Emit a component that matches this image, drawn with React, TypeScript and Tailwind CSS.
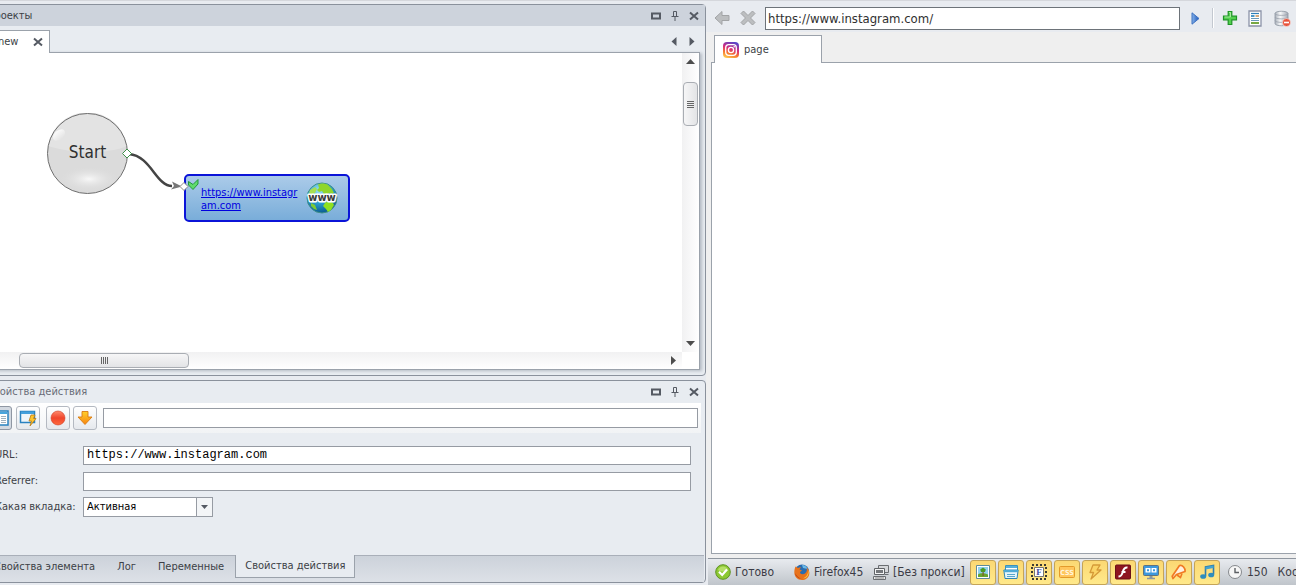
import { useState, type ReactNode } from 'react';

const TABS = ['Свойства элемента', 'Лог', 'Переменные', 'Свойства действия'];

function PanelTitle({ title, active }: { title: string; active?: boolean }) {
    return (
        <div className={`flex items-center justify-between pl-1 pr-[6px] ${active ? 'h-[21px] bg-[#cdd3dc] text-[#3c3f46]' : 'h-[22px] text-[#686d78]'}`}>
            <h2>{title}</h2>
            <div className="flex items-center gap-[9px]">
                <button aria-label="Развернуть">
                    <svg width="10" height="10" viewBox="0 0 10 10"><path d="M1 2.500h8v5H1z" fill="none" stroke="#555a63" strokeWidth="2" /></svg>
                </button>
                <button aria-label="Закрепить">
                    <svg width="10" height="10" viewBox="0 0 10 10"><path d="M3.500 5.500v-5h3v5M1.500 5.500h7M5 6v4" fill="none" stroke="#555a63" /><path d="M6 1h1v4H6z" fill="#555a63" /></svg>
                </button>
                <button aria-label="Закрыть">
                    <svg width="10" height="10" viewBox="0 0 10 10"><path d="M1 1.500l8 7M9 1.500l-8 7" fill="none" stroke="#555a63" strokeWidth="2" /></svg>
                </button>
            </div>
        </div>
    );
}

function GlobeIcon() {
    return (
        <svg width="32" height="32" viewBox="0 0 32 32" className="shrink-0">
            <defs>
                <radialGradient id="globe" cx="40%" cy="25%" r="75%">
                    <stop offset="0" stopColor="#9be0f5" />
                    <stop offset="0.55" stopColor="#2b9fd0" />
                    <stop offset="1" stopColor="#0b5c92" />
                </radialGradient>
            </defs>
            <circle cx="16" cy="16" r="15" fill="url(#globe)" stroke="#3f8f86" />
            <path d="M12 2.500c3-1.500 8-1 10 .5l4 4 2 4-3 1-2-1-2 2-3-1-2-3-3 1-2-2 2-2z" fill="#8fd62c" />
            <path d="M4 8l5-3 2 2-2 4-4 2-2-1z" fill="#a6df52" />
            <path d="M19 21l3-2 5 2 1 2-3 5-3 2-2-3-3-3z" fill="#8fe01f" />
            <path d="M5 21l4 2 2 5-3-1-3-3z" fill="#7ecb33" />
            <text x="16" y="19" textAnchor="middle" fontFamily="DejaVu Sans, sans-serif" fontWeight="bold" fontSize="10" fill="#3b3b3b" stroke="#fff" strokeWidth="3" strokeLinejoin="round" paintOrder="stroke">www</text>
        </svg>
    );
}

function StartNode() {
    return (
        <div className="absolute left-[58px] top-[60px] flex h-[81px] w-[81px] items-center justify-center">
            <svg className="absolute inset-0" width="81" height="81" viewBox="0 0 81 81">
                <defs>
                    <radialGradient id="glow" cx=".5" cy=".5" r=".5">
                        <stop stopColor="#f8f8f8" />
                        <stop offset="1" stopColor="#dadada" stopOpacity="0" />
                    </radialGradient>
                    <linearGradient id="shine" x2="0" y2="1">
                        <stop stopColor="#fbfbfb" />
                        <stop offset="1" stopColor="#e4e4e4" />
                    </linearGradient>
                </defs>
                <circle cx="40.500" cy="40.500" r="40" fill="#dbdbdb" />
                <path d="M1 33a40 40 0 0 1 79 0c-20 9-58 7-79 0z" fill="#e3e3e3" />
                <ellipse cx="42" cy="66" rx="31" ry="13" fill="url(#glow)" />
                <ellipse cx="12" cy="22" rx="7" ry="4.500" transform="rotate(-40 12 22)" fill="url(#shine)" />
                <circle cx="40.500" cy="40.500" r="40" fill="none" stroke="#6e6e6e" />
            </svg>
            <span className="relative pb-1 text-[17px] text-[#303030]">Start</span>
        </div>
    );
}

function Canvas() {
    return (
        <div className="relative min-w-0 flex-1 overflow-hidden bg-white">
            <StartNode />
            <div className="absolute left-[195px] top-[121px] flex h-[48px] w-[166px] items-center justify-between rounded-[5px] border-2 border-[#0b14d8] bg-gradient-to-b from-[#abcbe9] to-[#79add9] pl-[15px] pr-[10px]">
                <a href="https://www.instagram.com" className="pt-[2px] text-[11px] leading-[13px] text-[#0000e0] underline">
                    https://www.instagr<br />am.com
                </a>
                <GlobeIcon />
            </div>
            {/* link between the two nodes */}
            <svg className="absolute left-[130px] top-[90px]" width="90" height="56" viewBox="0 0 90 56">
                <path d="M10 11c22 2 27 32 43 32" fill="none" stroke="#444" strokeWidth="2.500" />
                <path d="M53 38.500l10 5-11 3 3-3.500z" fill="#777" />
                <path d="M3.500 10.500l4.500-4.500 4.500 4.500-4.500 4.500z" fill="#fff" stroke="#3f8f4a" />
                <path d="M61 43.500l4-4 4 4-4 4z" fill="#fff" stroke="#888" />
                <path d="M69.500 38.500v3.500l4.500 4.500 5-5.500v-4.500l-5 5z" fill="#5fdc6b" stroke="#24963c" />
            </svg>
        </div>
    );
}

function ProjectPanel() {
    return (
        <section className="flex min-h-0 flex-1 flex-col rounded-sm border border-[#8a919c] bg-[#e8ecf1]">
            <PanelTitle title="Проекты" active />
            <div className="flex min-h-0 flex-1 flex-col pb-[5px] pl-[5px] pr-[5px] pt-1">
                <div className="z-10 -mb-px flex items-start justify-between">
                    <button className="flex h-[23px] w-[62px] items-center justify-between border border-b-0 border-[#9ba2ab] bg-white pl-[9px] pr-[6px]">
                        new
                        <svg width="10" height="10" viewBox="0 0 10 10"><path d="M1 1.500l8 7M9 1.500l-8 7" stroke="#555a63" strokeWidth="2" /></svg>
                    </button>
                    <div className="flex h-[22px] items-center gap-3 pr-[5px]">
                        <button aria-label="Назад"><svg width="6" height="9" viewBox="0 0 6 9"><path d="M5.500 0v9L.5 4.500z" fill="#555a63" /></svg></button>
                        <button aria-label="Вперёд"><svg width="6" height="9" viewBox="0 0 6 9"><path d="M.5 0v9l5-4.500z" fill="#555a63" /></svg></button>
                    </div>
                </div>
                <div className="flex min-h-0 flex-1 flex-col border border-[#9ba2ab] bg-white shadow-[2px_1px_3px_#b4bac3]">
                    <div className="flex min-h-0 flex-1">
                        <Canvas />
                        <div className="flex w-[17px] flex-col items-center bg-gradient-to-r from-[#f1f1f2] to-white py-[6px]">
                            <svg width="9" height="5" viewBox="0 0 9 5"><path d="M0 5h9L4.500 0z" fill="#4d4d4d" /></svg>
                            <div className="mt-[18px] flex h-[44px] w-[15px] flex-col items-center justify-center gap-px rounded-sm border border-[#a9adb3] bg-gradient-to-r from-[#f6f6f7] to-[#e3e4e6]">
                                <i className="h-px w-[7px] bg-[#666]" />
                                <i className="h-px w-[7px] bg-[#666]" />
                                <i className="h-px w-[7px] bg-[#666]" />
                                <i className="h-px w-[7px] bg-[#666]" />
                            </div>
                            <svg className="mt-auto" width="9" height="5" viewBox="0 0 9 5"><path d="M0 0h9L4.500 5z" fill="#4d4d4d" /></svg>
                        </div>
                    </div>
                    <div className="flex h-[17px] pr-[17px]">
                        <div className="flex flex-1 items-center justify-between bg-gradient-to-b from-[#f1f1f2] to-white pl-[30px] pr-[6px]">
                            <div className="flex h-[15px] w-[170px] items-center justify-center gap-px rounded-sm border border-[#a9adb3] bg-gradient-to-b from-[#f6f6f7] to-[#e3e4e6]">
                                <i className="h-[7px] w-px bg-[#666]" />
                                <i className="h-[7px] w-px bg-[#666]" />
                                <i className="h-[7px] w-px bg-[#666]" />
                                <i className="h-[7px] w-px bg-[#666]" />
                            </div>
                            <svg width="5" height="9" viewBox="0 0 5 9"><path d="M0 0v9l5-4.500z" fill="#4d4d4d" /></svg>
                        </div>
                    </div>
                </div>
            </div>
        </section>
    );
}

function ToolButton({ label, pressed, children }: { label: string; pressed?: boolean; children: ReactNode }) {
    return (
        <button
            aria-label={label}
            className={`flex h-6 w-6 items-center justify-center rounded-[3px] border ${pressed ? 'border-[#8f97a3] bg-[#d3d9e1]' : 'border-[#b4b9c1] bg-gradient-to-b from-white to-[#e6e9ed]'}`}
        >
            {children}
        </button>
    );
}

function PropertiesPanel() {
    const [tab, setTab] = useState(TABS[3]);
    const [url, setUrl] = useState('https://www.instagram.com');

    return (
        <section className="flex flex-col rounded-sm border border-[#8a919c] bg-[#e8ecf1]">
            <PanelTitle title="Свойства действия" />
            <div className="mr-1 flex h-[30px] items-center bg-gradient-to-b from-white to-[#f1f3f5] pl-[5px] pr-[3px]">
                <ToolButton label="Таблица" pressed>
                    <svg width="18" height="18" viewBox="0 0 18 18"><path d="M1 2h16v14H1z" fill="#fff" stroke="#2a82c0" strokeWidth="1.500" /><path d="M2 3h14v2H2z" fill="#49a5dc" /><path d="M3 7.500h5M3 9.500h5M3 11.500h5M3 13.500h5M10 7.500h5M10 9.500h5M10 11.500h5M10 13.500h5" stroke="#9fb0bd" /></svg>
                </ToolButton>
                <div className="ml-1 mr-[6px]">
                    <ToolButton label="Событие">
                        <svg width="18" height="18" viewBox="0 0 18 18"><path d="M1.500 2.500h14v11h-14z" fill="#eef5fa" stroke="#2a82c0" strokeWidth="1.500" /><path d="M2 2.500h13v2.500H2z" fill="#43a0dc" /><path d="M12 6h4l-1.500 3.500H17L11 17l1.500-5H10z" fill="#ffc62e" stroke="#b97b17" strokeWidth=".8" /></svg>
                    </ToolButton>
                </div>
                <ToolButton label="Запись">
                    <svg width="16" height="16" viewBox="0 0 16 16">
                        <defs><linearGradient id="rec" x2="0" y2="1"><stop stopColor="#ff8a6c" /><stop offset=".5" stopColor="#f0452c" /><stop offset="1" stopColor="#ff6a3d" /></linearGradient></defs>
                        <circle cx="8" cy="8" r="7" fill="url(#rec)" stroke="#cf3b24" strokeWidth=".6" />
                    </svg>
                </ToolButton>
                <div className="ml-[3px] mr-[6px]">
                    <ToolButton label="Вниз">
                        <svg width="16" height="16" viewBox="0 0 16 16">
                            <defs><linearGradient id="down" x2="0" y2="1"><stop stopColor="#ffd12b" /><stop offset="1" stopColor="#f78410" /></linearGradient></defs>
                            <path d="M5 1.500h6V7h4l-7 7.500L1 7h4z" fill="url(#down)" stroke="#d97a12" strokeWidth=".9" />
                        </svg>
                    </ToolButton>
                </div>
                <input aria-label="Комментарий" className="h-5 min-w-0 flex-1 border border-[#969ba3] bg-white px-1" />
            </div>
            <form className="flex flex-col gap-[6px] pb-[38px] pl-3 pr-[14px] pt-3">
                <div className="flex h-5 items-center">
                    <label htmlFor="url" className="w-[88px]">URL:</label>
                    <input id="url" value={url} onChange={(e) => setUrl(e.target.value)} className="h-[19px] min-w-0 flex-1 border border-[#969ba3] bg-white px-[3px] font-['Liberation_Mono',monospace] text-[12px] text-black" />
                </div>
                <div className="flex h-5 items-center">
                    <label htmlFor="referrer" className="w-[88px]">Referrer:</label>
                    <input id="referrer" className="h-[19px] min-w-0 flex-1 border border-[#969ba3] bg-white px-[3px]" />
                </div>
                <div className="flex h-5 items-center">
                    <label htmlFor="which" className="w-[88px] whitespace-nowrap">Какая вкладка:</label>
                    <div className="relative">
                        <select id="which" className="h-5 w-[130px] appearance-none border border-[#969ba3] bg-white pl-[3px] text-black">
                            <option>Активная</option>
                            <option>Первая</option>
                        </select>
                        <span className="pointer-events-none absolute bottom-px right-px top-px flex w-[16px] items-center justify-center border-l border-[#969ba3] bg-[#f3f5f7]">
                            <svg width="7" height="4" viewBox="0 0 7 4"><path d="M0 0h7L3.500 4z" fill="#555a63" /></svg>
                        </span>
                    </div>
                </div>
            </form>
            <div className="mr-px flex h-[27px] items-start border-t border-[#a9afb9] bg-gradient-to-b from-[#ccd2da] to-[#dde1e7]">
                {TABS.map((name) => (
                    <button
                        key={name}
                        onClick={() => setTab(name)}
                        className={`whitespace-nowrap ${tab === name ? '-mt-px h-[23px] border border-t-0 border-[#9ba2ab] bg-[#e8ecf1] px-[9px]' : 'h-[22px] px-[11px]'}`}
                    >
                        {name}
                    </button>
                ))}
            </div>
        </section>
    );
}

function InstagramIcon() {
    return (
        <svg width="16" height="16" viewBox="0 0 16 16">
            <defs>
                <linearGradient id="insta" x1=".25" y1="1" x2=".6" y2="0">
                    <stop stopColor="#fecb52" />
                    <stop offset=".3" stopColor="#f7772e" />
                    <stop offset=".6" stopColor="#d62b7c" />
                    <stop offset="1" stopColor="#5a45c8" />
                </linearGradient>
            </defs>
            <rect width="16" height="16" rx="4" fill="url(#insta)" />
            <g fill="none" stroke="#fff" strokeWidth="1.300"><rect x="2.700" y="2.700" width="10.600" height="10.600" rx="3" /><circle cx="8" cy="8" r="2.600" /></g>
            <circle cx="11.200" cy="4.800" r=".8" fill="#fff" />
        </svg>
    );
}

function BrowserToolbar() {
    const [address, setAddress] = useState('https://www.instagram.com/');

    return (
        <div className="flex h-7 items-center bg-[#e8ebf0] pl-2 pr-[5px]">
            <button aria-label="Назад">
                <svg width="16" height="16" viewBox="0 0 16 16"><path d="M1 8l7-6.500v4h7v5H8v4z" fill="#bcbec0" stroke="#a2a4a6" /></svg>
            </button>
            <button aria-label="Стоп" className="ml-[10px]">
                <svg width="16" height="16" viewBox="0 0 16 16"><path d="M3.500 1L8 5.500 12.500 1 15 3.500 10.500 8l4.500 4.500-2.500 2.500L8 10.500 3.500 15 1 12.500 5.500 8 1 3.500z" fill="#bcbec0" stroke="#a2a4a6" /></svg>
            </button>
            <input
                aria-label="Адрес"
                value={address}
                onChange={(e) => setAddress(e.target.value)}
                className="ml-[9px] h-[23px] min-w-0 flex-1 border border-[#6d7379] bg-white px-[2px] text-[13px] text-[#303030]"
            />
            <button aria-label="Перейти" className="ml-[11px]">
                <svg width="9" height="13" viewBox="0 0 9 13">
                    <defs><linearGradient id="go"><stop stopColor="#86b4ec" /><stop offset="1" stopColor="#1d56b8" /></linearGradient></defs>
                    <path d="M1 .8v11.400l7-5.700z" fill="url(#go)" stroke="#3f72c0" />
                </svg>
            </button>
            <span className="ml-3 h-5 w-[2px] border-l border-[#c3c8d0] bg-white" />
            <button aria-label="Добавить" className="ml-2">
                <svg width="16" height="16" viewBox="0 0 16 16"><path d="M6.200 1.500h3.600v4.700h4.700v3.600H9.800v4.700H6.200V9.800H1.500V6.200h4.700z" fill="#52cf4e" stroke="#1e9426" strokeWidth="1.200" /><path d="M7 2.500h1.500V7H2.500" fill="none" stroke="#a5eb9c" /></svg>
            </button>
            <button aria-label="Страница" className="ml-[9px]">
                <svg width="16" height="17" viewBox="0 0 16 17"><path d="M2 1h12v15H2z" fill="#fff" stroke="#8b93a8" strokeWidth="1.300" /><path d="M4 3.500h8" stroke="#2f7fb8" strokeWidth="1.200" /><path d="M4 6h3.500" stroke="#4b97c7" strokeWidth="2" /><path d="M8.500 6H12" stroke="#d5a97a" strokeWidth="2" /><path d="M4 8.500h8M4 10.500h8" stroke="#6999ba" /><path d="M4 13h8" stroke="#77a843" strokeWidth="2" /></svg>
            </button>
            <button aria-label="Очистить данные" className="ml-[11px]">
                <svg width="17" height="17" viewBox="0 0 17 17">
                    <defs><linearGradient id="db"><stop stopColor="#a9b0ba" /><stop offset=".4" stopColor="#f8f9fa" /><stop offset="1" stopColor="#a3aab5" /></linearGradient></defs>
                    <path d="M1 3.500C1 .5 14 .5 14 3.500v10c0 3-13 3-13 0z" fill="url(#db)" stroke="#8d95a1" strokeWidth=".8" />
                    <path d="M1 3.500c0 2.500 13 2.500 13 0M1 7c0 2.500 13 2.500 13 0M1 10.500c0 2.500 13 2.500 13 0" fill="none" stroke="#9aa1ac" strokeWidth=".8" />
                    <circle cx="12.500" cy="12.500" r="4" fill="#e8533b" stroke="#fff" strokeWidth=".5" />
                    <path d="M10 12.500h5" stroke="#fff" strokeWidth="1.600" />
                </svg>
            </button>
        </div>
    );
}

const TOGGLES: { label: string; icon: ReactNode }[] = [
    { label: 'Изображения', icon: <><path d="M1.500 1.500h13v13h-13z" fill="#fff" stroke="#5f8b9a" /><path d="M3 3h10v10H3z" fill="#8fd1ee" /><path d="M3 10.500c3-2 7-1 10 0V13H3z" fill="#6aa62d" /><path d="M7.500 7h1.200v5H7.500z" fill="#79592c" /><path d="M8 3.500l2.800 2-.8 2.500H6L5.200 5.500z" fill="#4b9a28" /></> },
    { label: 'Окна', icon: <><path d="M2.500 1.500h12v9h-12z" fill="#fff" stroke="#3a91bd" /><path d="M3 2h11v2H3z" fill="#55b0da" /><path d="M.8 6h14.400l-1.200 8.500H2z" fill="#e4f5fc" stroke="#2f86b5" /><path d="M1 6h14v2.200H1z" fill="#4daad6" /><path d="M4 10.500h8M4 12.500h8" stroke="#59a7cc" /></> },
    { label: 'Фреймы', icon: <><path d="M1 1h14v14H1z" fill="none" stroke="#3b3a35" strokeWidth="2" strokeDasharray="2 2" /><path d="M3.500 3.500h9v9h-9z" fill="#fff" stroke="#777" /><text x="8" y="11" textAnchor="middle" fontFamily="Liberation Serif, serif" fontWeight="bold" fontSize="9" fill="#444ba0">F</text></> },
    { label: 'CSS', icon: <><rect x=".5" y="2.500" width="15" height="11" rx="1" fill="#ffc65c" stroke="#e39a2c" /><text x="8" y="11" textAnchor="middle" fontFamily="DejaVu Sans Condensed, sans-serif" fontSize="7" fontWeight="bold" fill="#fff5dc">CSS</text></> },
    { label: 'Скрипты', icon: <path d="M6 1h7l-3 5h4L4 15l2.500-6.500H3z" fill="#fbd466" stroke="#d59a38" strokeWidth="1.300" strokeLinejoin="round" /> },
    { label: 'Flash', icon: <><rect x=".5" y="1" width="15" height="14" rx="1" fill="#8e1520" stroke="#6b0f17" /><path d="M12.500 3.500C8 3 8 8 7 10c-.7 1.800-1.800 2.500-3.500 2.500M6.500 8h4" fill="none" stroke="#fff" strokeWidth="2" /></> },
    { label: 'Медиа', icon: <><rect x=".5" y="1.500" width="15" height="10" rx="1" fill="#3c98dc" stroke="#5e7180" /><path d="M2.500 4h5v4.500h-5zM8.500 4h5v4.500h-5z" fill="#fff" /><path d="M4 5.300h2v2H4zM10 5.300h2v2h-2z" fill="#3c98dc" /><path d="M6.500 12h3v2h-3z" fill="#8b97a1" /><path d="M4 14.500h8" stroke="#8b97a1" strokeWidth="1.500" /></> },
    { label: 'Уведомления', icon: <><path d="M8.500 1.500c3-1 6 3 5.500 6L5.500 10.500 2 14.500l-.8-2.200z" fill="#fff0dd" stroke="#f07a23" strokeWidth="1.700" strokeLinejoin="round" /><path d="M6 11l3.500 2.500 1.500-4" fill="none" stroke="#f07a23" strokeWidth="1.600" /></> },
    { label: 'Звук', icon: <><path d="M6.500 12V3l8-1.500v9" fill="none" stroke="#2f7eae" strokeWidth="1.600" /><path d="M6.500 3l8-1.500v2.500l-8 1.500z" fill="#45a3cf" /><ellipse cx="4.200" cy="12.500" rx="3" ry="2.300" fill="#2f8dbd" /><ellipse cx="12.200" cy="11" rx="3" ry="2.300" fill="#2f8dbd" /></> },
];

function StatusBar() {
    return (
        <footer className="ml-0.5 flex h-[27px] items-center overflow-hidden whitespace-nowrap border-t border-[#8f969f] bg-gradient-to-b from-[#e8ebef] to-[#c0c5cb] pl-[7px] text-[12px] text-[#3b3b45]">
            <div className="flex w-[79px] shrink-0 items-center gap-1">
                <svg width="16" height="16" viewBox="0 0 16 16"><circle cx="8" cy="8" r="7.300" fill="#8cc832" stroke="#5f9324" /><path d="M3 6a5.300 5.300 0 0 1 10 0c-2 2-7 2-10 0z" fill="#b5df68" /><path d="M4 7.800l3.200 3.200L12 5.500" fill="none" stroke="#fff" strokeWidth="2.200" /></svg>
                Готово
            </div>
            <div className="flex w-[79px] shrink-0 items-center gap-1">
                <svg width="16" height="16" viewBox="0 0 16 16">
                    <circle cx="8" cy="7.500" r="7" fill="#2a6cb0" />
                    <path d="M8 1c3 0 5 2 5.500 4L9 4z" fill="#68b9e8" />
                    <path d="M1.500 2.500L4 4c1-.8 2-1 3-.8L5.500 5.500l2.500 1-2 1.500c0 2.500 3.500 3 5.500 1 2-2 1.500-4 1-5.500 2 1.500 3.300 4 2.800 6.500C14.500 14 11.500 16 8 16 3.500 16 .3 12.500.3 8.500c0-2.500.5-4.500 1.200-6z" fill="#e8731c" />
                    <path d="M14.500 6c1 5-2 8.500-6 8.500 4-1 5.500-4.500 6-8.500z" fill="#ffcd3c" />
                    <path d="M1 9c.5 3 3 5.500 6.500 6C4 13.500 2.500 11.500 1 9z" fill="#b53a12" />
                </svg>
                Firefox45
            </div>
            <div className="flex w-24 shrink-0 items-center gap-1">
                <svg width="16" height="16" viewBox="0 0 16 16"><path d="M5.500 1.500h10v7h-10z" fill="#d5d7da" stroke="#6b6e72" /><path d="M12 10.500h3.500" stroke="#6b6e72" /><path d="M1.500 4.500h10v6h-10z" fill="#f3f4f5" stroke="#606367" /><path d="M3 6h7v3H3z" fill="#74777b" /><path d="M.5 12.500h12v3H.5z" fill="#e7e8ea" stroke="#6b6e72" /><path d="M2 14h9" stroke="#888" /></svg>
                [Без прокси]
            </div>
            <div className="ml-[1px] flex shrink-0 gap-0.5">
                {TOGGLES.map((t) => (
                    <button key={t.label} aria-label={t.label} className="flex h-[25px] w-[26px] items-center justify-center rounded-[3px] border border-[#c5a457] bg-gradient-to-b from-[#fbd873] to-[#ffe98b]">
                        <svg width="16" height="16" viewBox="0 0 16 16">{t.icon}</svg>
                    </button>
                ))}
            </div>
            <div className="ml-[7px] flex shrink-0 items-center gap-1">
                <svg width="16" height="16" viewBox="0 0 16 16"><circle cx="8" cy="8" r="6.500" fill="#f6f6f6" stroke="#85888c" /><path d="M8 4v4.500h4" fill="none" stroke="#5d6064" strokeWidth="1.400" /></svg>
                150
            </div>
            <span className="ml-[10px]">Координаты</span>
        </footer>
    );
}

export default function App() {
    return (
        <div className="flex h-screen overflow-hidden border-t border-[#d5d7dc] bg-[#e8ebf0] font-['DejaVu_Sans_Condensed','DejaVu_Sans',sans-serif] text-[11px] leading-4 text-[#3c3f46]">
            {/* the left dock runs past the window edge */}
            <div className="-ml-[18px] flex min-w-0 flex-[724] flex-col gap-1 pb-0.5 pt-[3px]">
                <ProjectPanel />
                <PropertiesPanel />
            </div>
            <main className="flex min-w-0 flex-[590] flex-col pt-[3px]">
                <BrowserToolbar />
                <div className="flex min-h-0 flex-1 flex-col bg-[#efefef] pb-1 pl-[5px] pt-[3px]">
                    <button className="z-10 -mb-px ml-[3px] flex h-7 w-[108px] items-center gap-[5px] border border-b-0 border-[#9ba2ab] bg-white pl-2">
                        <InstagramIcon />
                        page
                    </button>
                    <div className="flex-1 border border-r-0 border-[#9ba2ab] bg-white" />
                </div>
                <StatusBar />
            </main>
        </div>
    );
}
